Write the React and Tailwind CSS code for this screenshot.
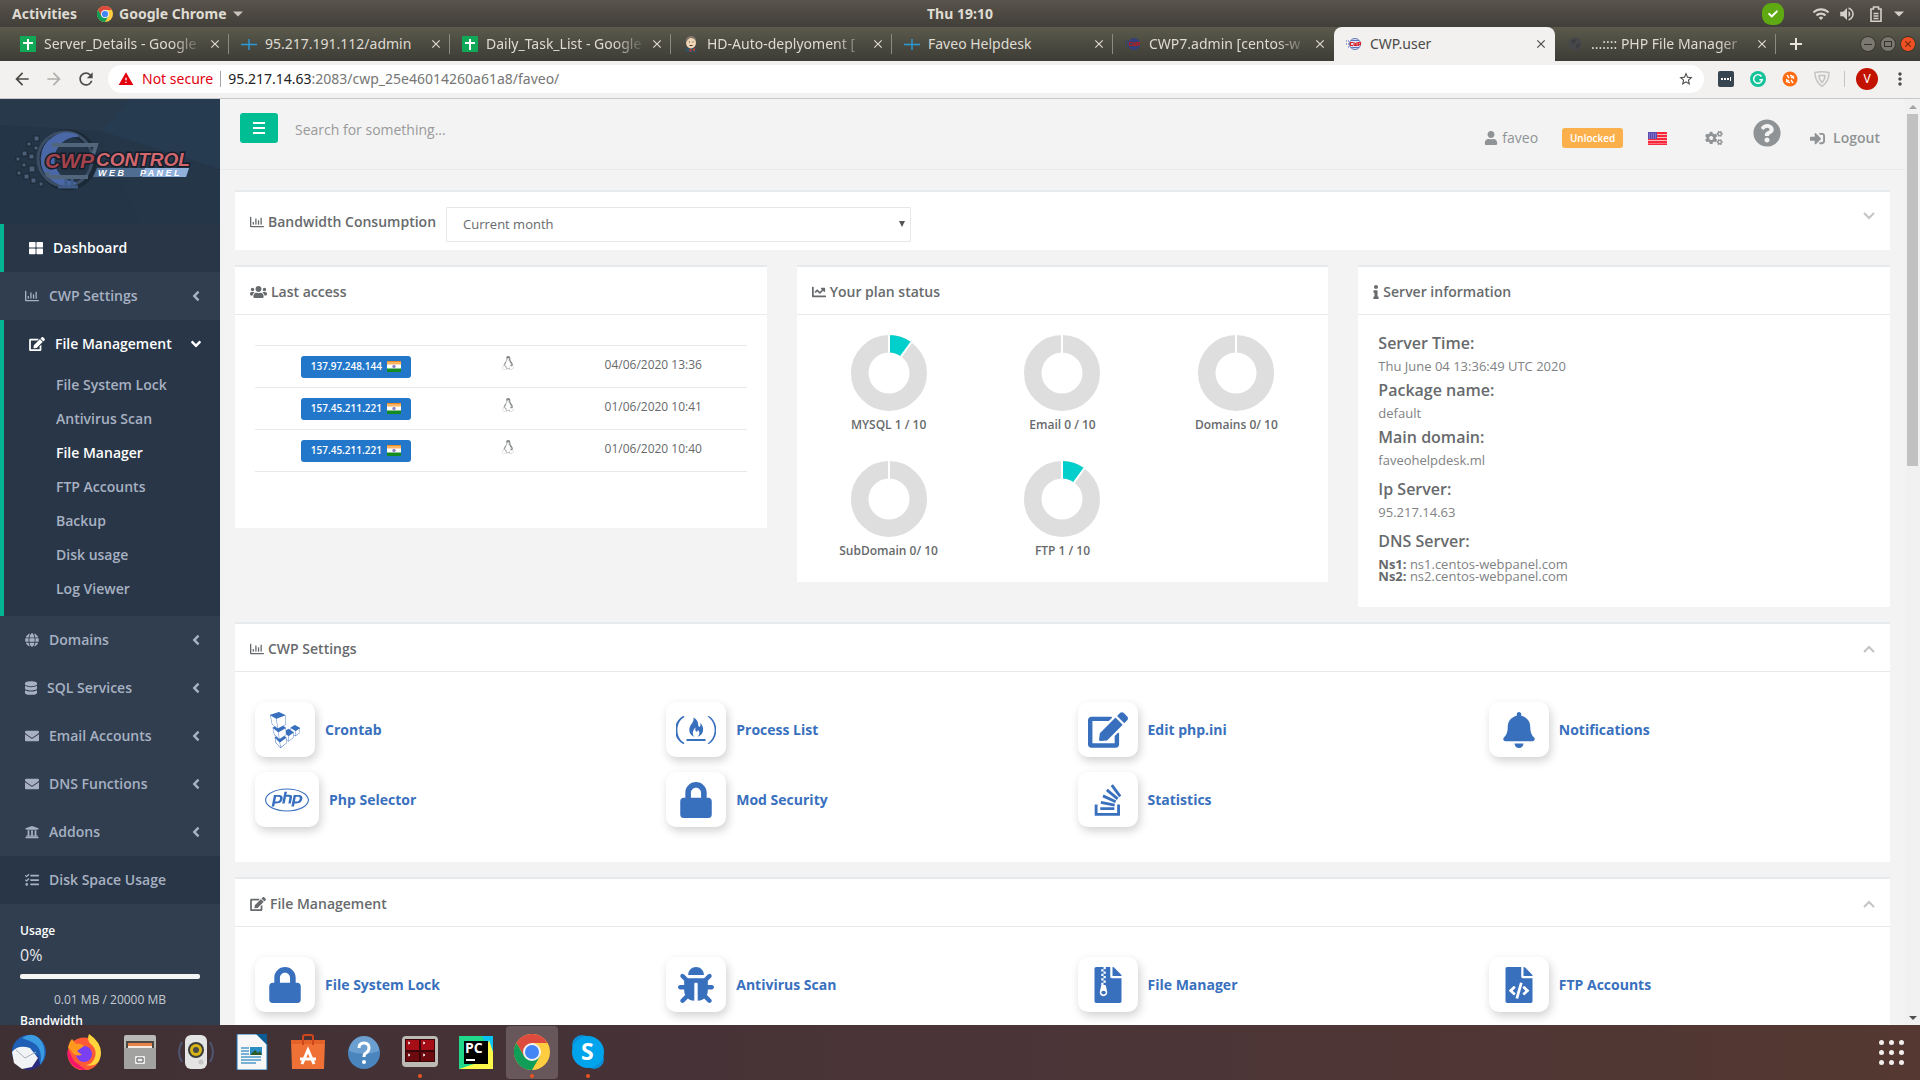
import { useState } from "react";
import {
  FaAngleDown,
  FaAngleLeft,
  FaBell,
  FaBug,
  FaChartLine,
  FaCheck,
  FaCogs,
  FaDatabase,
  FaEdit,
  FaEnvelope,
  FaFileArchive,
  FaFileCode,
  FaGlobe,
  FaInfo,
  FaLinode,
  FaLinux,
  FaLock,
  FaPhp,
  FaQuestionCircle,
  FaRegChartBar,
  FaSignInAlt,
  FaStackOverflow,
  FaTasks,
  FaThLarge,
  FaUniversity,
  FaUser,
  FaUsers,
} from "react-icons/fa";
import {
  MdArrowBack,
  MdArrowForward,
  MdClose,
  MdMoreVert,
  MdRefresh,
  MdStarBorder,
  MdVolumeUp,
  MdWarning,
  MdWifi,
} from "react-icons/md";

// parentheses with a flame over a bar
const ProcessIcon = ({ className }) => (
  <svg viewBox="0 0 40 36" className={className} fill="currentColor">
    <path d="M8.500 5C-2.500 11 -2.500 25 8.500 31L7.500 31.500C-4 27 -4 9 7.500 4.500z" />
    <path d="M8.500 4.500C-1 11 -1 25 8.500 31.500L7 32C-2.700 26 -2.700 10 7 4z" />
    <path d="M31.500 4.500C41 11 41 25 31.500 31.500L33 32C42.700 26 42.700 10 33 4z" />
    <path d="M17.500 5.500c7 4 3 7.500 6 9.500 1.500-1 1-3.500.500-4.500 5 5 4 12-2.500 14.500 2.500-3 2.300-5 .500-7-.500 2-1.500 2-2.300 1-.700-1-.200-2-.200-3.500-2.500 2.500-4 6-1 9.500-5-2-6.500-7-4-11.500 1.500-2.500 3.500-4 3-8z" />
    <path d="M10.500 27h19v2h-19z" />
  </svg>
);

const tabs = [
  { title: "Server_Details - Google", icon: "sheets" },
  { title: "95.217.191.112/admin", icon: "plus" },
  { title: "Daily_Task_List - Google", icon: "sheets" },
  { title: "HD-Auto-deplyoment [", icon: "jenkins" },
  { title: "Faveo Helpdesk", icon: "plus" },
  { title: "CWP7.admin [centos-w", icon: "cwpDark" },
  { title: "CWP.user", icon: "cwp" },
  { title: "...:::: PHP File Manager", icon: "globe" },
];

const fileLinks = [
  "File System Lock",
  "Antivirus Scan",
  "File Manager",
  "FTP Accounts",
  "Backup",
  "Disk usage",
  "Log Viewer",
];

const menu = [
  { label: "Domains", icon: FaGlobe },
  { label: "SQL Services", icon: FaDatabase, narrow: true },
  { label: "Email Accounts", icon: FaEnvelope },
  { label: "DNS Functions", icon: FaEnvelope },
  { label: "Addons", icon: FaUniversity },
];

const accesses = [
  { ip: "137.97.248.144", date: "04/06/2020 13:36" },
  { ip: "157.45.211.221", date: "01/06/2020 10:41" },
  { ip: "157.45.211.221", date: "01/06/2020 10:40" },
];

const plan = [
  { label: "MYSQL 1 / 10", used: 1 },
  { label: "Email 0 / 10", used: 0 },
  { label: "Domains 0/ 10", used: 0 },
  { label: "SubDomain 0/ 10", used: 0 },
  { label: "FTP 1 / 10", used: 1 },
];

const settingsCards = [
  { label: "Crontab", icon: FaLinode },
  { label: "Process List", icon: ProcessIcon, size: "w-10 h-9" },
  { label: "Edit php.ini", icon: FaEdit, size: "w-10 h-9" },
  { label: "Notifications", icon: FaBell },
  { label: "Php Selector", icon: FaPhp, size: "w-11 h-9" },
  { label: "Mod Security", icon: FaLock },
  { label: "Statistics", icon: FaStackOverflow },
];

const fileCards = [
  { label: "File System Lock", icon: FaLock },
  { label: "Antivirus Scan", icon: FaBug },
  { label: "File Manager", icon: FaFileArchive },
  { label: "FTP Accounts", icon: FaFileCode },
];

const ChromeLogo = ({ className }) => (
  <svg viewBox="0 0 36 36" className={className}>
    <circle cx="18" cy="18" r="18" fill="#ffcd40" />
    <path d="M18 9 H33.6 A18 18 0 0 0 2.4 9 L10.2 22.5 Z" fill="#dd4b3e" />
    <path d="M2.4 9 A18 18 0 0 0 18 36 L25.8 22.5 L18 26 L10.2 22.5 Z" fill="#109d58" />
    <circle cx="18" cy="18" r="9" fill="#f1f1f1" />
    <circle cx="18" cy="18" r="7" fill="#4285f4" />
  </svg>
);

const TabIcon = ({ kind }) => {
  if (kind === "sheets") {
    return (
      <svg viewBox="0 0 16 16" className="size-4 shrink-0">
        <rect width="16" height="16" rx="1" fill="#0fa958" />
        <path d="M7 3h2v3h4v2H9v6H7V8H3V6h4z" fill="#fff" />
      </svg>
    );
  }
  if (kind === "plus") {
    return (
      <svg viewBox="0 0 16 16" className="size-4 shrink-0" stroke="#2b9bd8" strokeWidth="1.4">
        <path d="M0 8.5h16M8 3v11" />
      </svg>
    );
  }
  if (kind === "jenkins") {
    return (
      <svg viewBox="0 0 16 16" className="size-4 shrink-0">
        <path d="M2 16c0-4 3-5 6-5s6 2 6 5z" fill="#335061" />
        <ellipse cx="8" cy="6.5" rx="5" ry="6" fill="#f0d6b7" />
        <path d="M3 7C2 2 5 0 8 0c4 0 5 3 5 6-1-3-3-4-5-4S4 4 3 7z" fill="#81766a" />
        <path d="M6 6h1M9.500 6h1M6.500 9.500h3" stroke="#4a3b2b" />
        <path d="M6 13l3 1 3-2v3l-3-1-2 2z" fill="#d33833" />
      </svg>
    );
  }
  if (kind === "globe") {
    return (
      <svg viewBox="0 0 16 16" className="size-4 shrink-0">
        <circle cx="8" cy="8" r="6.500" fill="#46474a" />
        <path d="M4 5l3-2 2 2-2 3zM9 9l4-2-1 4-3 1z" fill="#3b3c3d" />
      </svg>
    );
  }
  const dark = kind === "cwpDark";
  return (
    <svg viewBox="0 0 16 16" className="size-4 shrink-0">
      <circle cx="9" cy="8" r="5.500" fill={dark ? "#3a3f63" : "#dfe4f5"} stroke={dark ? "#2f3f8d" : "#5f74b8"} />
      <path d="M3 5H0M3 8H0M3 11H1" stroke={dark ? "#2f3f7d" : "#7d8fc4"} strokeWidth="1.500" strokeDasharray="1 1" />
      <path d="M5 4.500h8M5 11.500h8" stroke={dark ? "#2f3f8d" : "#5f74b8"} />
      <path d="M7 6.500H4.500v3H7M8 6v3.500h3V6M9.500 9V7M12.500 10V6.500h2v2h-2" fill="none" stroke={dark ? "#a3242c" : "#d9262e"} strokeWidth="1.200" />
    </svg>
  );
};

const TopBar = () => (
  <div className="h-[27px] shrink-0 grid grid-cols-3 items-center px-3 bg-linear-to-b from-[#59544c] to-[#413f39] font-['Noto_Sans',sans-serif] text-sm font-bold text-[#dfdbd2]">
    <div className="flex items-center">
      <button type="button">Activities</button>
      <button type="button" className="flex items-center ml-5">
        <ChromeLogo className="size-4 mr-1.5" />
        Google Chrome
        <svg viewBox="0 0 10 5" className="w-2.5 h-1.5 ml-1.5" fill="#c9c5bc">
          <path d="M0 0h10L5 5z" />
        </svg>
      </button>
    </div>
    <div className="text-center">Thu 19:10</div>
    <div className="flex items-center justify-end text-[#d5d1c8]">
      <span className="size-[22px] mr-7 rounded-[9px] bg-[#5fa912] flex items-center justify-center">
        <FaCheck className="size-2.5 text-white" />
      </span>
      <MdWifi className="size-[18px] mr-2" />
      <MdVolumeUp className="size-[18px] mr-3.5" />
      <svg viewBox="0 0 12 16" className="w-3 h-4 mr-3" fill="none" stroke="currentColor" strokeWidth="1.600">
        <path d="M1 3h2.500V1h5v2H11v12.200H1zM3.500 7.500h5M3.500 10h5M3.500 12.500h5" />
      </svg>
      <svg viewBox="0 0 10 5" className="w-2.5 h-1.5 mr-1" fill="currentColor">
        <path d="M0 0h10L5 5z" />
      </svg>
    </div>
  </div>
);

const Tab = ({ tab, active, divider, onSelect }) => (
  <div
    className={`h-full w-[221px] min-w-0 flex items-center pl-3 ${
      active ? "bg-[#f2f1ef] text-[#4b4a47] rounded-t-lg" : "text-[#dfdbd2]"
    }`}
  >
    <button type="button" onClick={onSelect} className="flex-1 min-w-0 flex items-center gap-2">
      <TabIcon kind={tab.icon} />
      <span
        className={`flex-1 min-w-0 text-left whitespace-nowrap overflow-hidden ${
          tab.title.length > 22 || tab.title.includes("[") ? "mask-r-from-80%" : ""
        }`}
      >
        {tab.title}
      </span>
    </button>
    <button type="button" aria-label={`Close ${tab.title}`} className="pl-1">
      <MdClose className="size-3.5" />
    </button>
    <span className={`w-px h-5 ml-1.5 ${divider ? "bg-[#8d8b80]" : ""}`} />
  </div>
);

const TabStrip = () => {
  const [current, setCurrent] = useState(6);
  return (
    <div className="h-[34px] shrink-0 flex items-center pl-2 pr-1 bg-linear-to-b from-[#5b5a4c] to-[#3d3c36] font-['Noto_Sans',sans-serif] text-sm">
      {tabs.map((tab, i) => (
        <Tab
          key={tab.title}
          tab={tab}
          active={i === current}
          divider={i !== current && i !== current - 1}
          onSelect={() => setCurrent(i)}
        />
      ))}
      <button type="button" aria-label="New tab" className="ml-3.5 text-[#e8e5dc]">
        <svg viewBox="0 0 12 12" className="size-3" stroke="currentColor" strokeWidth="2">
          <path d="M6 0v12M0 6h12" />
        </svg>
      </button>
      <div className="ml-auto flex gap-1">
        <button type="button" aria-label="Minimize" className="size-4 rounded-full border border-[#37362f] bg-[#7b796f] flex items-center justify-center">
          <span className="w-2 h-px bg-[#33322c]" />
        </button>
        <button type="button" aria-label="Restore" className="size-4 rounded-full border border-[#37362f] bg-[#7b796f] flex items-center justify-center">
          <span className="w-2 h-1.5 border border-[#33322c]" />
        </button>
        <button type="button" aria-label="Close window" className="size-4 rounded-full border border-[#37362f] bg-[#ee5022] flex items-center justify-center">
          <MdClose className="size-2.5 text-[#4d1c0c]" />
        </button>
      </div>
    </div>
  );
};

const Toolbar = () => (
  <div className="h-[38px] shrink-0 flex items-center pl-3 pr-2.5 pb-0.5 bg-[#f2f1ef] border-b border-[#c9c8c6] font-['Noto_Sans',sans-serif] text-sm text-[#4b4a47]">
    <button type="button" aria-label="Back">
      <MdArrowBack className="size-5" />
    </button>
    <button type="button" aria-label="Forward" className="ml-3 text-[#b0afac]">
      <MdArrowForward className="size-5" />
    </button>
    <button type="button" aria-label="Reload" className="ml-3">
      <MdRefresh className="size-5" />
    </button>
    <div className="flex-1 h-7 ml-3 pl-2.5 pr-2.5 flex items-center rounded-full bg-white">
      <MdWarning className="size-4 text-[#e2000f]" />
      <span className="ml-2 text-[#e2000f]">Not secure</span>
      <span className="w-px h-4 mx-[7px] bg-[#a5a5a5]" />
      <div role="textbox" tabIndex={0} aria-label="Address" className="flex-1 text-[#767676]">
        <span className="text-[#222]">95.217.14.63</span>:2083/cwp_25e46014260a61a8/faveo/
      </div>
      <button type="button" aria-label="Bookmark">
        <MdStarBorder className="size-4" />
      </button>
    </div>
    <div className="flex items-center gap-4 ml-3.5">
      <span className="size-4 rounded-xs bg-[#36454f] flex items-center justify-center gap-px">
        <i className="size-0.5 bg-white" />
        <i className="size-0.5 bg-white" />
        <i className="size-0.5 bg-white" />
        <i className="w-px h-1 bg-white" />
      </span>
      <svg viewBox="0 0 16 16" className="size-4" fill="none" stroke="#fff" strokeWidth="1.400">
        <circle cx="8" cy="8" r="8" fill="#15c39a" stroke="none" />
        <path d="M11.500 5.500A4.300 4.300 0 1 0 12.200 8.800H9.500" />
      </svg>
      <svg viewBox="0 0 16 16" className="size-4">
        <circle cx="8" cy="8" r="7.500" fill="#ff6c12" />
        <path d="M8 4.500a3.500 3.500 0 0 1 3.500 3.500M8 11.500A3.500 3.500 0 0 1 4.500 8M5 4l2 3M11 12L9 9M12 5L9 7M4 11l3-2" fill="none" stroke="#fff" strokeWidth="1.400" />
      </svg>
      <svg viewBox="0 0 16 16" className="size-4" fill="none" stroke="#c4c4c4" strokeWidth="1.500">
        <path d="M1 1.500q7-1.500 14 0 0 9-7 14-7-5-7-14z" />
        <path d="M5 4.500h6q0 4-3 7-3-3-3-7z" />
      </svg>
    </div>
    <span className="w-px h-4 ml-3.5 bg-[#c5c4c2]" />
    <button type="button" aria-label="Profile" className="ml-[11px] size-[22px] rounded-full bg-[#c41200] text-white text-xs flex items-center justify-center">
      V
    </button>
    <button type="button" aria-label="Menu" className="ml-3">
      <MdMoreVert className="size-5" />
    </button>
  </div>
);

const CwpLogo = () => (
  <svg viewBox="0 0 220 125" className="w-full h-[125px] shrink-0 bg-[#27384b]">
    <path d="M0 0h130L100 32 0 26z" fill="#29394c" />
    <path d="M130 0h90v70L100 32z" fill="#263a50" />
    <path d="M100 32L220 70v55h-80z" fill="#253649" />
    <path d="M0 26l100 6 40 93H0z" fill="#243547" />
    <g fill="#4a6079" stroke="#1b2735">
      <rect x="34" y="37" width="5" height="5" />
      <rect x="27" y="43" width="4" height="4" />
      <rect x="34" y="47" width="4" height="4" />
      <rect x="22" y="52" width="5" height="5" />
      <rect x="29" y="55" width="5" height="5" />
      <rect x="16" y="58" width="4" height="4" />
      <rect x="22" y="64" width="4" height="4" />
      <rect x="29" y="67" width="6" height="6" />
      <rect x="17" y="72" width="4" height="4" />
      <rect x="24" y="75" width="5" height="5" />
      <rect x="31" y="79" width="5" height="5" />
      <rect x="39" y="83" width="4" height="4" />
    </g>
    <circle cx="67" cy="61" r="27" fill="none" stroke="#161f2b" strokeWidth="7" opacity=".6" />
    <circle cx="65" cy="60" r="27" fill="none" stroke="#3a4d63" strokeWidth="3" />
    <path d="M78 37A25.500 25.500 0 1 0 76 84A23 23 0 1 1 78 37z" fill="#4a68a8" stroke="#4a68a8" strokeWidth="2" />
    <path d="M52 46h44l-3 10M88 78H52q-5 0-5-5" fill="none" stroke="#51657b" strokeWidth="4" />
    <path d="M58 88h20M66 80v7M72 80v7" fill="none" stroke="#3f5b86" strokeWidth="3" />
    <g fontFamily="Liberation Sans, sans-serif" fontStyle="italic" stroke="#151d29" strokeWidth="3" paintOrder="stroke">
      <text x="45" y="69" fill="#a5434c" fontSize="21" fontWeight="700">CWP</text>
      <text x="96" y="67" fill="#d1686f" fontSize="19">CONTROL</text>
    </g>
    <path d="M97 69h92l-3 9H93z" fill="#4f6d91" />
    <path d="M145 69h44l-3 9h-44z" fill="#8fb0da" />
    <g fill="#fff" fontFamily="Liberation Sans, sans-serif" fontSize="9" fontWeight="700" fontStyle="italic">
      <text x="98" y="77">W E B</text>
      <text x="140" y="77">P A N E L</text>
    </g>
  </svg>
);

const MenuItem = ({ label, icon: Icon, narrow }) => (
  <a href="#" className="h-12 flex items-center pl-[25px] pr-4">
    <Icon className={`h-3.5 ${narrow ? "w-3" : "w-3.5"}`} />
    <span className="ml-2.5">{label}</span>
    <FaAngleLeft className="size-4 ml-auto" />
  </a>
);

const Sidebar = () => (
  <aside className="w-[220px] shrink-0 overflow-hidden flex flex-col bg-[#303e50] text-sm font-semibold text-[#a7b1c2]">
    <CwpLogo />
    <nav className="shrink-0">
      <a href="#" className="h-12 flex items-center pl-[25px] border-l-4 border-[#04b593] bg-[#293647] text-white">
        <FaThLarge className="size-3.5" />
        <span className="ml-2.5">Dashboard</span>
      </a>
      <MenuItem label="CWP Settings" icon={FaRegChartBar} />
      <div className="border-l-4 border-[#04b593] bg-[#293647] pb-2.5">
        <a href="#" className="h-12 flex items-center pl-[25px] pr-4 text-white">
          <FaEdit className="w-4 h-3.5" />
          <span className="ml-2.5">File Management</span>
          <FaAngleDown className="size-4 ml-auto" />
        </a>
        {fileLinks.map((link) => (
          <a
            key={link}
            href="#"
            className={`h-[34px] flex items-center pl-[52px] ${link === "File Manager" ? "text-white" : ""}`}
          >
            {link}
          </a>
        ))}
      </div>
      {menu.map((item) => (
        <MenuItem key={item.label} {...item} />
      ))}
      <a href="#" className="h-12 flex items-center pl-[25px] bg-[#293647]">
        <FaTasks className="size-3.5" />
        <span className="ml-2.5">Disk Space Usage</span>
      </a>
    </nav>
    <div className="shrink-0 px-5 pt-[17px] text-white">
      <h4 className="text-xs leading-5">Usage</h4>
      <p className="text-base leading-7 font-normal text-[#e6e8eb]">0%</p>
      <div className="h-[5px] mt-[5px] rounded-xs bg-[#f5f5f5]" />
      <p className="mt-2.5 text-center text-xs leading-[22px] font-normal text-[#c5cad2]">0.01 MB / 20000 MB</p>
      <h4 className="text-xs leading-5">Bandwidth</h4>
      <p className="text-base leading-7 font-normal">0%</p>
    </div>
  </aside>
);

const UsFlag = () => (
  <svg viewBox="0 0 19 13" className="w-[19px] h-[13px]">
    <rect width="19" height="13" fill="#fbb" />
    <path d="M0 1h19M0 4h19M0 7h19M0 10h19M0 12.500h19" stroke="#f5283c" strokeWidth="1.900" />
    <rect width="9" height="7" fill="#5a4bb0" />
    <path d="M1 2h8M1 4h8M1 6h8" stroke="#b9b2e6" strokeWidth=".7" strokeDasharray="1 1" />
  </svg>
);

const IndiaFlag = () => (
  <svg viewBox="0 0 14 11" className="w-3.5 h-[11px]">
    <rect width="14" height="11" fill="#fff" />
    <rect width="14" height="3.500" fill="#f9b466" />
    <rect width="14" height="1" fill="#ef8a1d" />
    <rect y="7.500" width="14" height="3.500" fill="#148a22" />
    <circle cx="7" cy="5.500" r="1.700" fill="#8d85c9" />
  </svg>
);

const Header = () => (
  <header className="h-[71px] flex items-start pl-5 pr-[25px] border-b border-[#e7eaec]">
    <button type="button" aria-label="Toggle menu" className="mt-3.5 w-[38px] h-[30px] rounded-[3px] bg-[#00be93] flex flex-col items-center justify-center gap-[3px]">
      <span className="w-3 h-0.5 bg-white" />
      <span className="w-3 h-0.5 bg-white" />
      <span className="w-3 h-0.5 bg-white" />
    </button>
    <input
      type="text"
      aria-label="Search"
      placeholder="Search for something..."
      className="mt-3 ml-[17px] w-52 h-9 text-sm outline-none bg-transparent placeholder:text-[#999]"
    />
    <div className="ml-auto mt-5 h-[38px] flex items-center text-sm text-[#909395]">
      <a href="#" className="flex items-center gap-1">
        <FaUser className="size-3.5" />
        faveo
      </a>
      <span className="ml-6 w-[61px] h-5 rounded-[3px] bg-[#fbb04c] text-white text-[10px] font-semibold flex items-center justify-center">
        Unlocked
      </span>
      <a href="#" aria-label="Language" className="ml-[25px]">
        <UsFlag />
      </a>
      <a href="#" aria-label="Settings" className="ml-[38px]">
        <FaCogs className="w-[18px] h-3.5" />
      </a>
      <a href="#" aria-label="Help" className="ml-[30px] self-start">
        <FaQuestionCircle className="size-7" />
      </a>
      <a href="#" className="ml-[29px] flex items-center gap-2 font-semibold">
        <FaSignInAlt className="size-[15px]" />
        Logout
      </a>
    </div>
  </header>
);

const Chevron = ({ up, className = "" }) => (
  <button type="button" aria-label={up ? "Collapse" : "Expand"} className={`ml-auto ${className}`}>
    <svg viewBox="0 0 12 8" className="w-3 h-2" fill="none" stroke="#c4c4c4" strokeWidth="2">
      <path d={up ? "M1 7l5-5 5 5" : "M1 1l5 5 5-5"} />
    </svg>
  </button>
);

const Panel = ({ title, icon: Icon, iconSize = "w-3.5 h-3.5", collapsible, children }) => (
  <section className="bg-white border-t-2 border-[#e7eaec]">
    <div className="h-12 flex items-center px-[15px] pt-0.5 border-b border-[#e7eaec]">
      <Icon className={iconSize} />
      <h5 className="ml-1 text-sm font-semibold">{title}</h5>
      {collapsible && <Chevron up />}
    </div>
    {children}
  </section>
);

const Donut = ({ used }) => (
  <svg viewBox="-38 -38 76 76" className="size-[76px] -rotate-90" fill="none" strokeWidth="17.500">
    <circle r="29.250" stroke="#dedede" />
    {used > 0 && <circle r="29.250" stroke="#00cfcb" pathLength="10" strokeDasharray={`${used} 10`} />}
    <path d="M20 0H38" stroke="#fff" strokeWidth="2" />
    {used > 0 && <path d="M20 0H38" stroke="#fff" strokeWidth="2" transform={`rotate(${used * 36})`} />}
  </svg>
);

const IconCards = ({ cards }) => (
  <div className="grid grid-cols-4 gap-x-[30px] gap-y-[15px] px-5 pt-[30px] pb-[35px]">
    {cards.map(({ label, icon: Icon, size = "w-9 h-9" }) => (
      <a key={label} href="#" className="flex items-center gap-2.5 text-sm font-bold text-[#3970be]">
        <span className="min-w-[60px] h-[55px] px-2.5 rounded-[10px] bg-white shadow-[2px_4px_10px_rgba(0,0,0,0.18)] flex items-center justify-center">
          <Icon className={size} />
        </span>
        {label}
      </a>
    ))}
  </div>
);

const InfoItem = ({ label, className = "", children }) => (
  <div className={className}>
    <dt className="text-base leading-6 font-semibold">{label}</dt>
    <dd className="text-[13px] leading-[23px] text-[#808284]">{children}</dd>
  </div>
);

const Dashboard = () => (
  <div className="flex-1 flex flex-col gap-[15px] px-[15px] pt-5 text-[#676a6c]">
    <section className="h-[60px] flex items-center px-[15px] pt-0.5 bg-white border-t-2 border-[#e7eaec]">
      <FaRegChartBar className="size-3.5" />
      <label htmlFor="period" className="ml-1 text-sm font-semibold">
        Bandwidth Consumption
      </label>
      <div className="relative ml-2.5 mt-1 w-[465px]">
        <select id="period" className="w-full h-[35px] pl-4 pt-0.5 appearance-none border border-[#e5e6e7] rounded-[1px] bg-white text-[13px]">
          <option>Current month</option>
          <option>Last month</option>
        </select>
        <svg viewBox="0 0 6 6" className="absolute right-1.5 top-3.5 size-1.5 pointer-events-none" fill="#555">
          <path d="M0 0h6L3 6z" />
        </svg>
      </div>
      <Chevron className="self-start mt-[18px]" />
    </section>

    <div className="grid grid-cols-3 gap-[30px] items-start">
      <Panel title="Last access" icon={FaUsers} iconSize="w-[17px] h-3.5">
        <div className="px-5 pt-[30px] pb-14">
          <table className="w-full table-fixed border-collapse text-xs text-center">
            <tbody>
              {accesses.map(({ ip, date }) => (
                <tr key={date} className="h-[42px] border-y border-[#e7eaec]">
                  <td className="w-[41%]">
                    <button type="button" className="h-[22px] w-[110px] px-2.5 rounded-[3px] bg-[#2277cb] text-white text-[10px] font-semibold inline-flex items-center justify-between">
                      {ip}
                      <IndiaFlag />
                    </button>
                  </td>
                  <td className="w-[21%] align-top pt-2">
                    <FaLinux className="inline size-3.5 opacity-80" />
                  </td>
                  <td className="pb-1">{date}</td>
                </tr>
              ))}
            </tbody>
          </table>
        </div>
      </Panel>

      <Panel title="Your plan status" icon={FaChartLine}>
        <div className="grid grid-cols-3 gap-y-[26px] px-[5px] pt-5 pb-[21px]">
          {plan.map(({ label, used }) => (
            <div key={label} className="flex flex-col items-center gap-1">
              <Donut used={used} />
              <span className="text-xs leading-5 font-semibold">{label}</span>
            </div>
          ))}
        </div>
      </Panel>

      <Panel title="Server information" icon={FaInfo} iconSize="w-1.5 h-3.5">
        <dl className="px-5 pt-4 pb-[25px]">
          <InfoItem label="Server Time:">Thu June 04 13:36:49 UTC 2020</InfoItem>
          <InfoItem label="Package name:">default</InfoItem>
          <InfoItem label="Main domain:">faveohelpdesk.ml</InfoItem>
          <InfoItem label="Ip Server:" className="mt-[5px]">95.217.14.63</InfoItem>
          <div className="mt-[5px]">
            <dt className="text-base leading-6 font-semibold">DNS Server:</dt>
            <dd className="pt-[5px] text-[13px] leading-3 text-[#808284]">
              <b className="text-[#676a6c]">Ns1:</b> ns1.centos-webpanel.com
              <br />
              <b className="text-[#676a6c]">Ns2:</b> ns2.centos-webpanel.com
            </dd>
          </div>
        </dl>
      </Panel>
    </div>

    <Panel title="CWP Settings" icon={FaRegChartBar} collapsible>
      <IconCards cards={settingsCards} />
    </Panel>
    <Panel title="File Management" icon={FaEdit} iconSize="w-4 h-3.5" collapsible>
      <IconCards cards={fileCards} />
    </Panel>
  </div>
);

const Scrollbar = () => (
  <div className="w-[15px] shrink-0 flex flex-col items-center bg-[#f1f1f1]">
    <svg viewBox="0 0 8 15" className="w-2 h-[15px] shrink-0" fill="#a3a3a3">
      <path d="M0 10h8L4 6z" />
    </svg>
    <div className="w-[11px] h-[38%] bg-[#c1c1c1]" />
    <svg viewBox="0 0 8 15" className="w-2 h-[15px] shrink-0 mt-auto" fill="#505050">
      <path d="M0 6h8l-4 4z" />
    </svg>
  </div>
);

const dockApps = [
  {
    name: "Thunderbird",
    art: (
      <>
        <circle cx="19" cy="18" r="17" fill="#1f5fb5" />
        <path d="M12 4Q24-4 32 8 38 20 30 31 34 14 22 8z" fill="#3a9be0" />
        <path d="M30 31q-8 7-16 4l14-14z" fill="#2b2a7c" />
        <path d="M2 18Q8 10 20 14l8 10-6 9-10 2-8-6z" fill="#f1f3f5" />
        <path d="M6 16l9 8 11-6" fill="none" stroke="#a9b3bd" />
      </>
    ),
  },
  {
    name: "Firefox",
    art: (
      <>
        <circle cx="18" cy="20" r="16.500" fill="#ff5a36" />
        <path d="M18 36A17 17 0 0 1 2 15l6 12 12 9z" fill="#f5156c" />
        <path d="M23 0q-3 7 3 11 5 5 3 12-2 7-9 8 14 3 15-12Q35 8 23 0z" fill="#ffd53b" />
        <circle cx="18" cy="20" r="8" fill="#7b3ff2" />
        <path d="M2 14Q3 8 6 5l4 5q5-1 8 2l-7 5 5 4q-9 2-11-5z" fill="#ff9a1f" />
      </>
    ),
  },
  {
    name: "Files",
    art: (
      <>
        <rect x="2" y="1" width="32" height="34" rx="2" fill="#b9b9b8" />
        <rect x="4" y="7" width="28" height="8" fill="#4c4843" />
        <path d="M6 9h24v6H6z" fill="#e8824a" />
        <path d="M6 12h24v3H6z" fill="#f3ece2" />
        <rect x="2" y="14" width="32" height="21" rx="1" fill="#a2a2a1" />
        <rect x="13" y="22" width="10" height="8" rx="1" fill="#eee" />
        <path d="M15 24h6v4h-6z" fill="none" stroke="#555" />
      </>
    ),
  },
  {
    name: "Rhythmbox",
    art: (
      <>
        <path d="M4 8q-6 10 0 20M32 8q6 10 0 20" fill="none" stroke="#4f5570" strokeWidth="2" />
        <rect x="7" y="1" width="22" height="34" rx="6" fill="#e4e4e4" />
        <circle cx="18" cy="16" r="8" fill="#3d3d3d" />
        <circle cx="18" cy="16" r="6" fill="#d7b516" />
        <circle cx="18" cy="16" r="3" fill="#4a4a4a" />
        <circle cx="23" cy="28" r="2.500" fill="#c5c5c5" />
      </>
    ),
  },
  {
    name: "Writer",
    art: (
      <>
        <path d="M3 0h20l10 10v26H3z" fill="#f7f7f7" stroke="#1873b1" />
        <path d="M22 0h11v11z" fill="#0d5c93" />
        <path d="M7 14h8M7 17h8M7 20h8M7 23h20M7 26h20M7 29h15" stroke="#4d9bcb" strokeWidth="1.500" />
        <rect x="16" y="13" width="12" height="8" fill="#2a8ec4" />
        <path d="M16 21l5-5 3 3 2-2 2 4z" fill="#2e5a2a" />
      </>
    ),
  },
  {
    name: "Software",
    art: (
      <>
        <path d="M1 6h34l-1 29H2z" fill="#ef7135" />
        <path d="M1 6h34v4H1z" fill="#e2622a" />
        <path d="M13 11V3q0-2 2-2h6q2 0 2 2v8" fill="none" stroke="#d1451a" strokeWidth="2" />
        <path d="M12 30l6-14 6 14M10 25h16" fill="none" stroke="#fff" strokeWidth="3" />
      </>
    ),
  },
  {
    name: "Help",
    art: (
      <>
        <circle cx="18" cy="19" r="16" fill="#4a86bd" />
        <path d="M3 17a15 15 0 0 1 30 0q-15 6-30 0z" fill="#6a9fd0" />
        <path d="M13 14q0-5 5-5t5 5q0 3-3 5-2 1-2 4" fill="none" stroke="#fff" strokeWidth="3" />
        <circle cx="18" cy="28" r="2" fill="#fff" />
      </>
    ),
  },
  {
    name: "Terminator",
    running: true,
    art: (
      <>
        <rect x="0" y="2" width="36" height="31" rx="4" fill="#bdb9b4" />
        <rect x="3" y="5" width="30" height="23" fill="#3a0508" />
        <path d="M4 6h13v10H4zM19 6h13v10H19z" fill="#a50e17" />
        <path d="M4 18h13v9H4zM19 18h13v9H19z" fill="#6d0a10" />
        <path d="M6 8l2 1-2 1M21 8l2 1-2 1M6 20l2 1-2 1M21 20l2 1-2 1" stroke="#fff" fill="none" />
      </>
    ),
  },
  {
    name: "PyCharm",
    art: (
      <>
        <path d="M1 2h34v33H1z" fill="#21d789" />
        <path d="M24 2h11v24z" fill="#07c3f2" />
        <path d="M1 35l24-8 6-21 4 12v17z" fill="#fcf84a" />
        <rect x="6" y="7" width="24" height="23" fill="#000" />
        <text x="7" y="19" fill="#fff" fontFamily="Open Sans, sans-serif" fontSize="14" fontWeight="700">PC</text>
        <path d="M8 26h9" stroke="#fff" strokeWidth="2" />
      </>
    ),
  },
  { name: "Chrome", running: true, focused: true },
  {
    name: "Skype",
    running: true,
    art: (
      <>
        <circle cx="12" cy="11" r="10" fill="#0a8fd8" />
        <circle cx="24" cy="25" r="10" fill="#0a8fd8" />
        <circle cx="18" cy="18" r="16" fill="#00a4ec" />
        <text x="11" y="26" fill="#fff" fontFamily="Open Sans, sans-serif" fontSize="23" fontWeight="700">S</text>
      </>
    ),
  },
];

const Dock = () => (
  <div className="h-[55px] shrink-0 flex items-center pr-3 bg-linear-to-r from-[#3f3034] via-[#4a3438] to-[#543831]">
    {dockApps.map(({ name, art, running, focused }) => (
      <button
        key={name}
        type="button"
        aria-label={name}
        className={`mx-0.5 w-[52px] h-[53px] rounded-sm flex flex-col items-center pt-2 ${focused ? "bg-[#67575b]" : ""}`}
      >
        {art ? (
          <svg viewBox="0 0 36 36" className="size-9">{art}</svg>
        ) : (
          <ChromeLogo className="size-9" />
        )}
        <span className={`mt-1 size-1 rounded-full ${running ? "bg-[#e95420]" : ""}`} />
      </button>
    ))}
    <button type="button" aria-label="Show applications" className="ml-auto grid grid-cols-3 gap-[5px] p-1">
      {Array.from({ length: 9 }, (_, i) => (
        <span key={i} className="size-[5px] rounded-full bg-[#f2eeee]" />
      ))}
    </button>
  </div>
);

const App = () => (
  <div className="h-screen flex flex-col overflow-hidden font-['Open_Sans',sans-serif]">
    <TopBar />
    <TabStrip />
    <Toolbar />
    <div className="flex-1 min-h-0 flex bg-[#f3f3f4]">
      <Sidebar />
      <main className="flex-1 min-w-0 overflow-y-auto [scrollbar-width:none]">
        <Header />
        <Dashboard />
      </main>
      <Scrollbar />
    </div>
    <Dock />
  </div>
);

export default App;
